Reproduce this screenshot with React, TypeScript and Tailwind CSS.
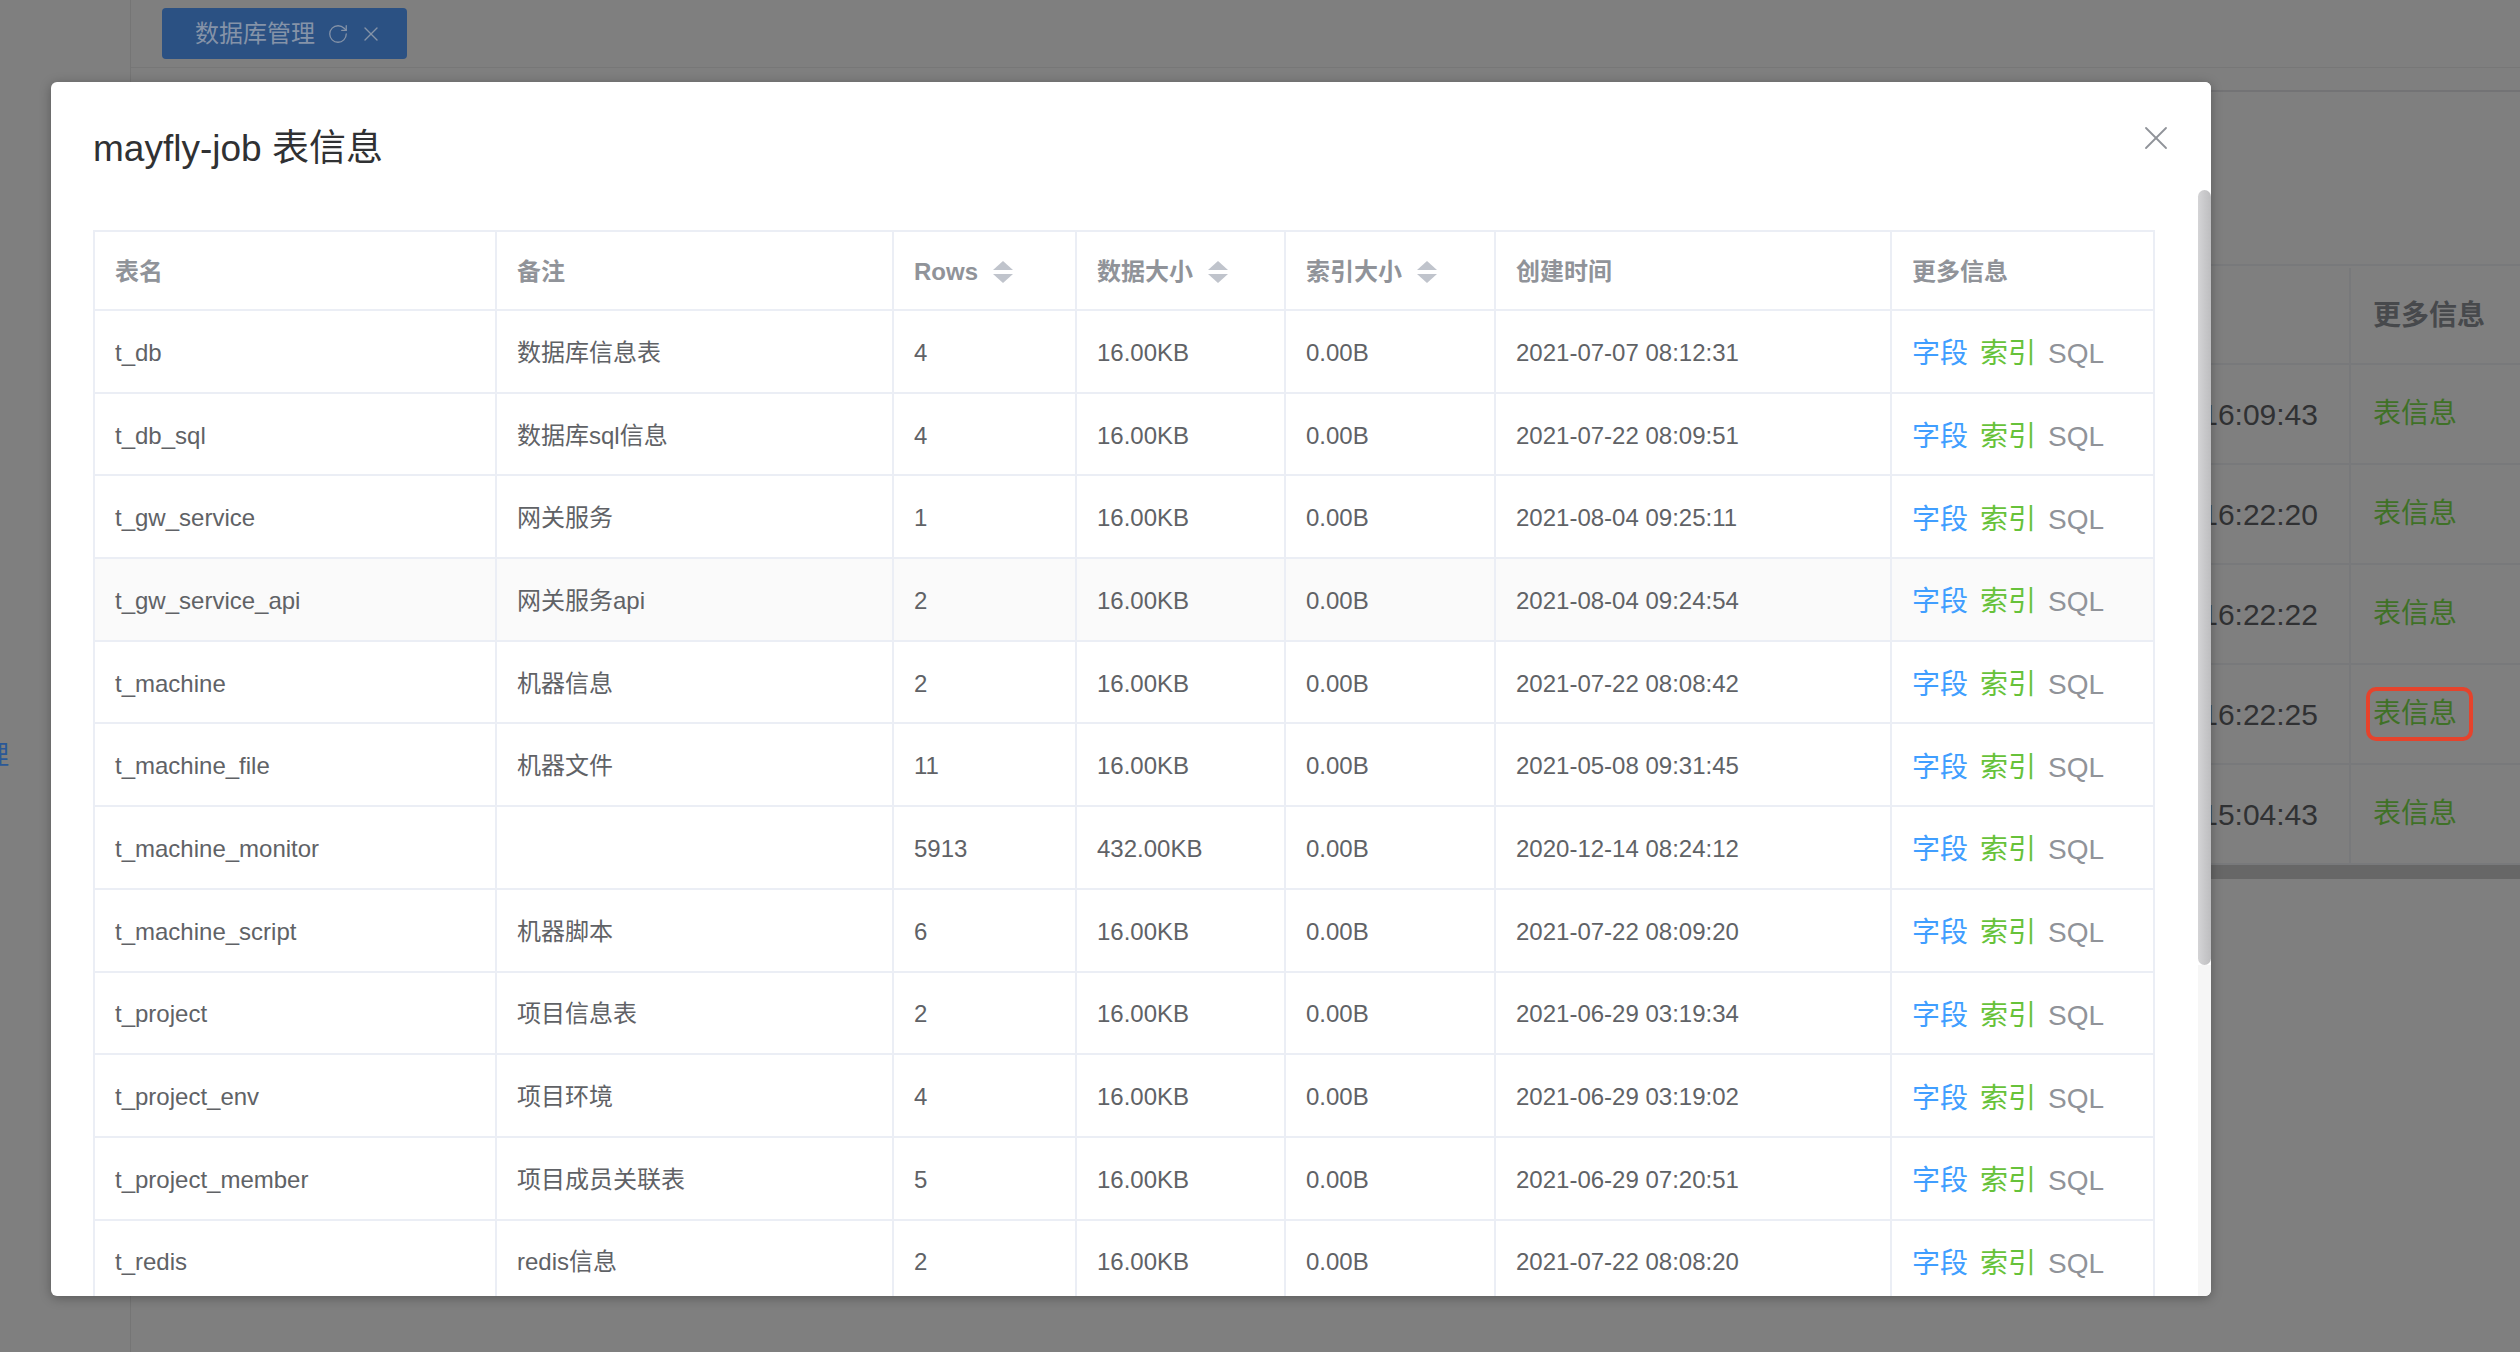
import { RotateCw, X } from "lucide-react";

const rows = [
  { name: "t_db", comment: "数据库信息表", rows: "4", data: "16.00KB", index: "0.00B", time: "2021-07-07 08:12:31" },
  { name: "t_db_sql", comment: "数据库sql信息", rows: "4", data: "16.00KB", index: "0.00B", time: "2021-07-22 08:09:51" },
  { name: "t_gw_service", comment: "网关服务", rows: "1", data: "16.00KB", index: "0.00B", time: "2021-08-04 09:25:11" },
  { name: "t_gw_service_api", comment: "网关服务api", rows: "2", data: "16.00KB", index: "0.00B", time: "2021-08-04 09:24:54" },
  { name: "t_machine", comment: "机器信息", rows: "2", data: "16.00KB", index: "0.00B", time: "2021-07-22 08:08:42" },
  { name: "t_machine_file", comment: "机器文件", rows: "11", data: "16.00KB", index: "0.00B", time: "2021-05-08 09:31:45" },
  { name: "t_machine_monitor", comment: "", rows: "5913", data: "432.00KB", index: "0.00B", time: "2020-12-14 08:24:12" },
  { name: "t_machine_script", comment: "机器脚本", rows: "6", data: "16.00KB", index: "0.00B", time: "2021-07-22 08:09:20" },
  { name: "t_project", comment: "项目信息表", rows: "2", data: "16.00KB", index: "0.00B", time: "2021-06-29 03:19:34" },
  { name: "t_project_env", comment: "项目环境", rows: "4", data: "16.00KB", index: "0.00B", time: "2021-06-29 03:19:02" },
  { name: "t_project_member", comment: "项目成员关联表", rows: "5", data: "16.00KB", index: "0.00B", time: "2021-06-29 07:20:51" },
  { name: "t_redis", comment: "redis信息", rows: "2", data: "16.00KB", index: "0.00B", time: "2021-07-22 08:08:20" },
];

const bgRows = [
  "2021-07-05 16:09:43",
  "2021-07-05 16:22:20",
  "2021-07-05 16:22:22",
  "2021-07-05 16:22:25",
  "2021-07-06 15:04:43",
];

function SortCaret() {
  return (
    <svg width="20" height="22" viewBox="0 0 20 22" className="ml-[15px] shrink-0">
      <polygon points="10,0 20,9 0,9" fill="#c0c4cc" />
      <polygon points="0,13 20,13 10,22" fill="#c0c4cc" />
    </svg>
  );
}

const cell = "flex items-center pl-[20px] border-r-2 border-[#ebeef5] h-full shrink-0 overflow-hidden whitespace-nowrap";

export default function App() {
  return (
    <div
      className="relative w-[2520px] h-[1352px] overflow-hidden bg-[#7f7f7f] flex"
      style={{ fontFamily: '"Liberation Sans", "Noto Sans CJK SC", sans-serif' }}
    >
      {/* page behind the mask */}
      <div className="w-[131px] h-full border-r border-[#757575] shrink-0 flex flex-col">
        <div className="mt-[742px] w-[9px] overflow-hidden flex justify-end">
          <span className="text-[26px] leading-[26px] text-[#2a5897] shrink-0">理</span>
        </div>
      </div>
      <div className="flex-1 flex flex-col">
        <div className="h-[68px] border-b border-[#777777] flex items-start pl-[31px] pt-[8px]">
          <div className="h-[51px] w-[245px] rounded-[4px] bg-[#2b5183] flex items-center pl-[33px] text-[#8593a8]">
            <span className="text-[24px] leading-none">数据库管理</span>
            <RotateCw className="w-[22px] h-[22px] ml-[12px]" strokeWidth={1.4} />
            <X className="w-[24px] h-[24px] ml-[10px]" strokeWidth={1.4} />
          </div>
        </div>
        <div className="h-[24px] border-b-2 border-[#737375]" />
        <div className="mt-[172px] border-t-2 border-[#78797b] flex flex-col text-[28px]">
          <div className="h-[99px] flex border-b-2 border-[#78797b] pt-[2px]">
            <div className="flex-1 border-r-2 border-[#78797b]" />
            <div className="w-[169px] flex items-center pl-[22px] font-bold text-[#47494c]">更多信息</div>
          </div>
          {bgRows.map((t, i) => (
            <div key={t} className="h-[100px] flex border-b-2 border-[#78797b]">
              <div className="flex-1 border-r-2 border-[#78797b] flex items-center justify-end pr-[31px] text-[#303133] text-[30px]">
                {t}
              </div>
              <div className="w-[169px] flex items-center pl-[22px] text-[#3f7127]">
                {i === 3 ? (
                  <span className="-ml-[7px] pl-[3px] pr-[12px] py-[9px] border-4 border-[#e5432c] rounded-[10px] leading-none">表信息</span>
                ) : (
                  <span>表信息</span>
                )}
              </div>
            </div>
          ))}
          <div className="h-[14px] bg-[#676767]" />
        </div>
      </div>

      {/* dialog */}
      <div className="absolute left-[51px] top-[82px] w-[2160px] h-[1214px] bg-white rounded-[6px] overflow-hidden shadow-[0_2px_12px_rgba(0,0,0,0.3)] flex">
        <div className="flex-1 flex flex-col pl-[42px]">
          <div className="flex items-start justify-between pt-[48px] pr-[22px]">
            <h2 className="text-[37px] leading-[37px] text-[#303133]">mayfly-job 表信息</h2>
            <X className="w-[40px] h-[40px] text-[#909399] mt-[-12px] mb-[-3px]" strokeWidth={1.1} />
          </div>

          <div className="mt-[63px] w-[2062px] border-l-2 border-t-2 border-[#ebeef5] text-[24px] text-[#606266]">
            <div className="h-[79px] flex border-b-2 border-[#ebeef5] text-[#909399] font-bold">
              <div className={`${cell} w-[402px] pt-[2px]`}>表名</div>
              <div className={`${cell} w-[397px] pt-[2px]`}>备注</div>
              <div className={`${cell} w-[183px] pt-[2px]`}>Rows<SortCaret /></div>
              <div className={`${cell} w-[209px] pt-[2px]`}>数据大小<SortCaret /></div>
              <div className={`${cell} w-[210px] pt-[2px]`}>索引大小<SortCaret /></div>
              <div className={`${cell} w-[396px] pt-[2px]`}>创建时间</div>
              <div className={`${cell} w-[263px] pt-[2px]`}>更多信息</div>
            </div>
            {rows.map((r, i) => (
              <div
                key={r.name}
                className={`h-[82.7px] flex border-b-2 border-[#ebeef5] ${i === 3 ? "bg-[#fafafa]" : "bg-white"}`}
              >
                <div className={`${cell} w-[402px] pt-[3px]`}>{r.name}</div>
                <div className={`${cell} w-[397px] pt-[3px]`}>{r.comment}</div>
                <div className={`${cell} w-[183px] pt-[3px]`}>{r.rows}</div>
                <div className={`${cell} w-[209px] pt-[3px]`}>{r.data}</div>
                <div className={`${cell} w-[210px] pt-[3px]`}>{r.index}</div>
                <div className={`${cell} w-[396px] pt-[3px]`}>{r.time}</div>
                <div className={`${cell} w-[263px] gap-[12px] pt-[6px] text-[28px]`}>
                  <span className="text-[#409eff]">字段</span>
                  <span className="text-[#67c23a]">索引</span>
                  <span className="text-[#909399]">SQL</span>
                </div>
              </div>
            ))}
          </div>
        </div>

        {/* scrollbar */}
        <div className="w-[13px] shrink-0 flex flex-col">
          <div className="h-[108px] bg-white" />
          <div className="h-[775px] rounded-full bg-gradient-to-r from-[#d4d4d6] to-[#bdbdbf]" />
          <div className="flex-1 bg-[#f6f6f6]" />
        </div>
      </div>
    </div>
  );
}
